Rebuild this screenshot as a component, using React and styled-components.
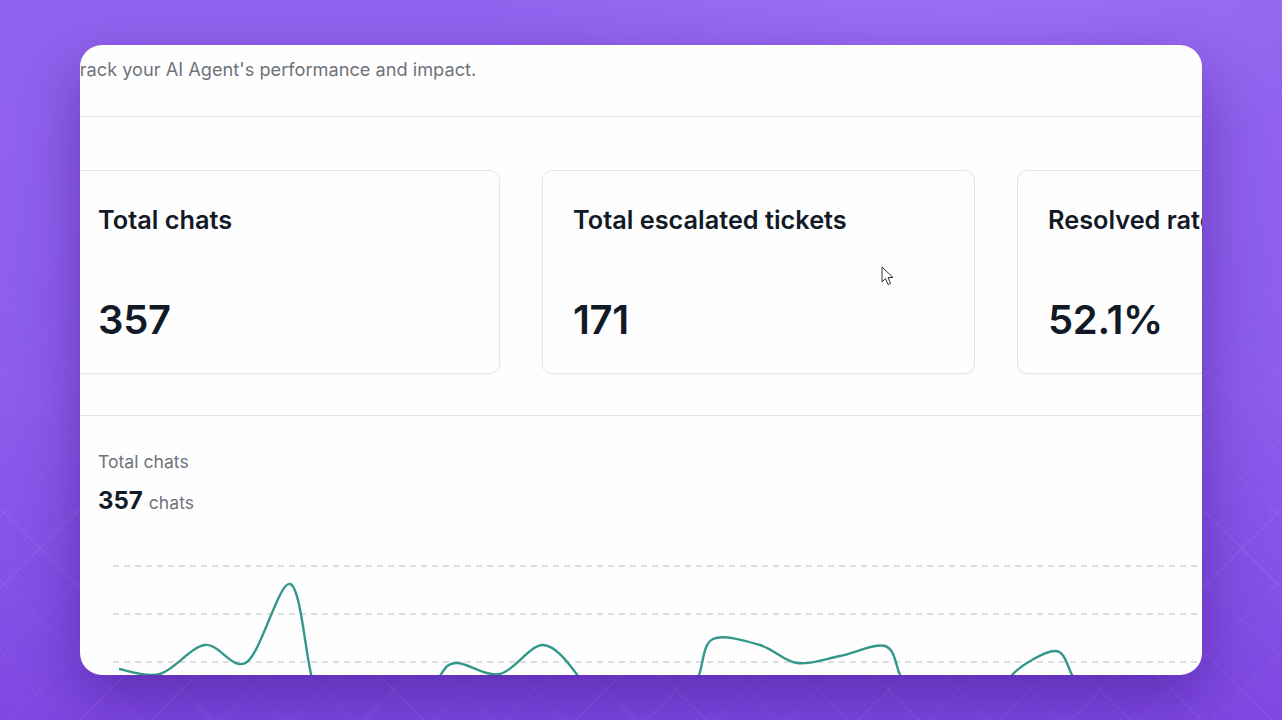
import React from "react";
import styled, { createGlobalStyle } from "styled-components";

const GlobalStyle = createGlobalStyle`
  html, body {
    margin: 0;
    padding: 0;
    height: 100%;
  }
  body {
    font-family: Inter, "Noto Sans", "Liberation Sans", sans-serif;
    -webkit-font-smoothing: antialiased;
  }
`;

const Backdrop = styled.div`
  position: relative;
  width: 1282px;
  height: 720px;
  overflow: hidden;
  background:
    radial-gradient(ellipse 700px 300px at 75% -5%, rgba(170, 130, 255, 0.45), transparent 70%),
    linear-gradient(180deg, #9164ef 0%, #8c5cec 55%, #7f48e2 100%);
  display: flex;
  justify-content: center;
  padding-top: 45px;
  box-sizing: border-box;

  &::before {
    content: "";
    position: absolute;
    inset: 0;
    background:
      repeating-linear-gradient(45deg, transparent 0 49px, rgba(255, 255, 255, 0.07) 49px 50px),
      repeating-linear-gradient(-45deg, transparent 0 49px, rgba(255, 255, 255, 0.07) 49px 50px);
    -webkit-mask-image: linear-gradient(180deg, transparent 25%, #000 75%);
    mask-image: linear-gradient(180deg, transparent 25%, #000 75%);
  }
`;

const Window = styled.div`
  position: relative;
  z-index: 1;
  width: 1122px;
  height: 630px;
  background: #fefefe;
  border-radius: 22px;
  overflow: hidden;
  box-shadow: 0 24px 60px rgba(50, 10, 120, 0.45);
`;

const Page = styled.div`
  margin-left: -13px;
  width: 1560px;
  display: flex;
  flex-direction: column;
`;

const Header = styled.div`
  height: 72px;
  box-sizing: border-box;
  padding: 11px 0 0 2px;
  border-bottom: 1px solid #e7e7ea;
`;

const Subtitle = styled.p`
  margin: 0;
  font-size: 18.2px;
  line-height: 26px;
  color: #70737b;
  white-space: nowrap;
`;

const CardRow = styled.div`
  display: flex;
  gap: 42px;
  padding: 53px 0 41px;
  border-bottom: 1px solid #e7e7ea;
`;

const Card = styled.div`
  flex: 0 0 433px;
  height: 204px;
  box-sizing: border-box;
  padding: 32px 30px 0;
  border: 1px solid #e4e4e8;
  border-radius: 10px;
  box-shadow: 0 1px 2px rgba(0, 0, 0, 0.04);
  display: flex;
  flex-direction: column;
  overflow: hidden;
`;

const CardTitle = styled.h3`
  margin: 0;
  font-size: 25.3px;
  line-height: 34px;
  font-weight: 600;
  color: #131a27;
  white-space: nowrap;
`;

const CardValue = styled.div`
  margin-top: 61px;
  font-size: 40px;
  line-height: 44px;
  font-weight: 600;
  color: #131a27;
  letter-spacing: -0.3px;
`;

const ChartSection = styled.div`
  padding: 34px 31px 0;
`;

const ChartLabel = styled.div`
  font-size: 17.6px;
  line-height: 24px;
  color: #70737b;
`;

const ChartTotal = styled.div`
  margin-top: 12px;
  display: flex;
  align-items: baseline;
  gap: 6px;
`;

const TotalNumber = styled.span`
  font-size: 24px;
  font-weight: 700;
  color: #131a27;
`;

const TotalUnit = styled.span`
  font-size: 17.6px;
  color: #70737b;
`;

const ChartBox = styled.div`
  margin-top: 41px;
  svg {
    display: block;
  }
`;

const Pointer = styled.svg`
  position: absolute;
  left: 801px;
  top: 221px;
`;

const cards = [
  { title: "Total chats", value: "357" },
  { title: "Total escalated tickets", value: "171" },
  { title: "Resolved rate", value: "52.1%" },
];

// screen points shifted into the chart's own coordinates
const points = [
  [21, 113], [62, 118], [107, 89], [149, 106], [192, 28], [214, 122],
  [230, 154], [330, 154], [342, 120], [359, 107], [402, 118], [445, 89],
  [480, 120], [494, 154], [588, 154], [601, 119], [615, 83], [662, 89],
  [699, 107], [742, 100], [787, 90], [802, 119], [815, 154], [902, 154],
  [914, 119], [957, 95], [974, 119], [988, 154], [1150, 154],
];

const smoothPath = (pts) => {
  let d = `M${pts[0][0]},${pts[0][1]}`;
  for (let i = 0; i < pts.length - 1; i++) {
    const p0 = pts[i - 1] || pts[i];
    const p1 = pts[i];
    const p2 = pts[i + 1];
    const p3 = pts[i + 2] || p2;
    const c1x = p1[0] + (p2[0] - p0[0]) / 6;
    const c1y = p1[1] + (p2[1] - p0[1]) / 6;
    const c2x = p2[0] - (p3[0] - p1[0]) / 6;
    const c2y = p2[1] - (p3[1] - p1[1]) / 6;
    d += ` C${c1x},${c1y} ${c2x},${c2y} ${p2[0]},${p2[1]}`;
  }
  return d;
};

const Chart = () => (
  <svg width="1150" height="200" viewBox="0 0 1150 200">
    {[10, 58, 106, 154].map((y) => (
      <line key={y} x1="15" x2="1150" y1={y} y2={y} stroke="#d2d3d6" strokeWidth="1.3" strokeDasharray="6 5" />
    ))}
    <path d={smoothPath(points)} fill="none" stroke="#35968a" strokeWidth="2.4" strokeLinejoin="round" />
  </svg>
);

export default function App() {
  return (
    <>
      <GlobalStyle />
      <Backdrop>
        <Window>
          <Page>
            <Header>
              <Subtitle>Track your AI Agent's performance and impact.</Subtitle>
            </Header>
            <CardRow>
              {cards.map((c) => (
                <Card key={c.title}>
                  <CardTitle>{c.title}</CardTitle>
                  <CardValue>{c.value}</CardValue>
                </Card>
              ))}
            </CardRow>
            <ChartSection>
              <ChartLabel>Total chats</ChartLabel>
              <ChartTotal>
                <TotalNumber>357</TotalNumber>
                <TotalUnit>chats</TotalUnit>
              </ChartTotal>
              <ChartBox>
                <Chart />
              </ChartBox>
            </ChartSection>
          </Page>
          <Pointer width="13" height="20" viewBox="0 0 13 20">
            <path d="M1 1 L1 16 L4.5 12.5 L7 18.5 L9.5 17.5 L7 11.5 L12 11.5 Z" fill="#fff" stroke="#333" strokeWidth="1" strokeLinejoin="round" />
          </Pointer>
        </Window>
      </Backdrop>
    </>
  );
}
